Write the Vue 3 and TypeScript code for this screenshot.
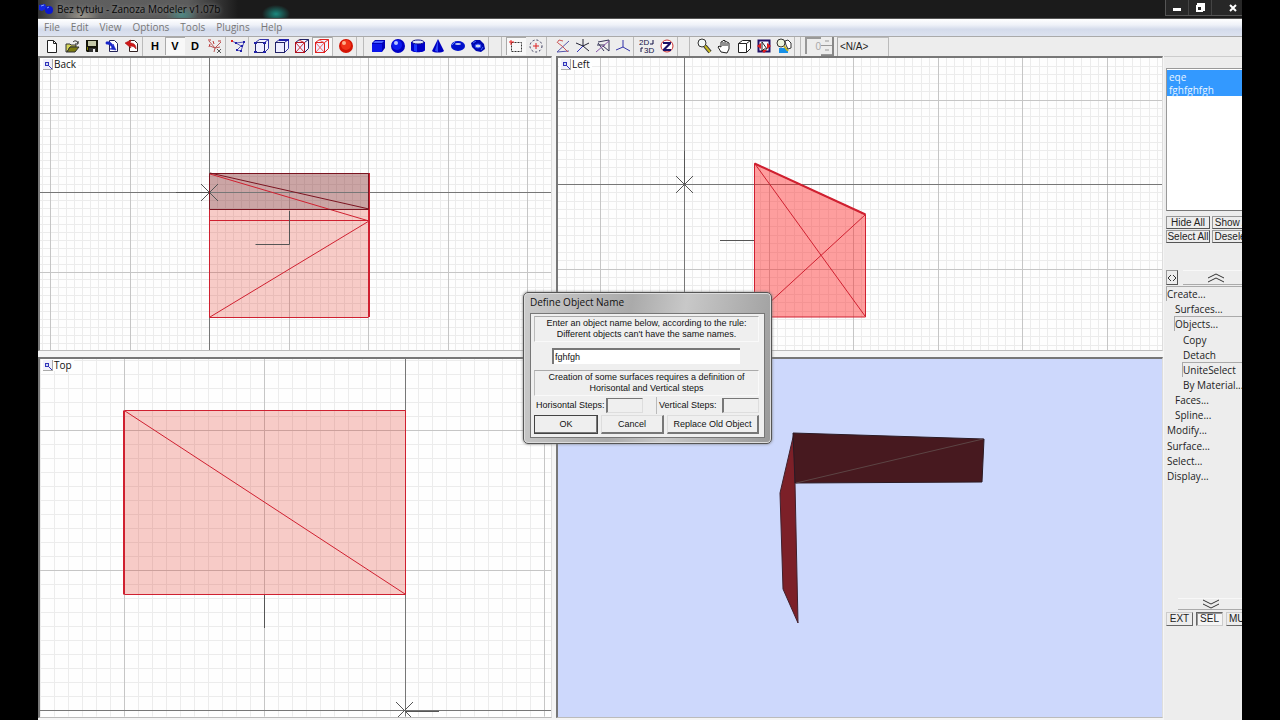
<script setup lang="ts">
import { ref } from 'vue'

interface Tool { name: string; art: string; on?: boolean }
interface Line { k: string; x1: number | string; y1: number | string; x2: number | string; y2: number | string; cls: string }

const menus = ['File', 'Edit', 'View', 'Options', 'Tools', 'Plugins', 'Help']
const letter = (c: string) => `<text x="8" y="12" text-anchor="middle" font-family="Liberation Sans" font-weight="bold" font-size="11">${c}</text>`
const cube = (front: string, back: string, extra = '') =>
  `<path d="M5.500 1.500h9v9l-4 4M5.500 1.500l-4 3M14.500 1.500l-4 3" fill="#f4f4ff" stroke="${back}"/><rect x="1.500" y="4.500" width="9" height="10" fill="#eef" stroke="${front}" stroke-width="1"/>${extra}`

const fileTools: Tool[] = [
  { name: 'New', art: '<path d="M3.500 2.500h6l3 3v9h-9z" fill="#fff" stroke="#222"/><path d="M9.500 2.500v3h3" fill="none" stroke="#222"/>' },
  { name: 'Open', art: '<path d="M2 6h4l1 1h5v2H6l-3 5H2z" fill="#d6d65a" stroke="#333"/><path d="M3 14l3-5h9l-4 5z" fill="#7c7c10" stroke="#333"/><path d="M9 4c2-2 4-1 5 1M14 3v3h-3" fill="none" stroke="#222"/>' },
  { name: 'Save', art: '<path d="M2 2h12v12H3l-1-1z" fill="#151509"/><path d="M4 3h8v5H4z" fill="#c5c9a8"/><path d="M5 10h7v4H5z" fill="#333"/><path d="M9 11h2v3H9z" fill="#eee"/><path d="M3 9h1v3H3z" fill="#808000"/>' },
  { name: 'Import', art: '<path d="M5.500 2.500h5l3 3v8h-8z" fill="#fff" stroke="#225"/><path d="M2 4c4-1 6 1 7 4V6l3 6-6-1 2-1C7 7 5 6 2 6z" fill="#1428c8" stroke="#22c" stroke-width=".6"/>' },
  { name: 'Export', art: '<path d="M5.500 2.500h5l3 3v8h-8z" fill="#fff" stroke="#322"/><path d="M1 5l6-3-1 3c4 0 6 2 6 6-1-2-3-3-6-3l1 2z" fill="#d01818" stroke="#a11" stroke-width=".6"/>' },
]
const axisTools: Tool[] = [
  { name: 'H', art: letter('H') },
  { name: 'V', art: letter('V'), on: true },
  { name: 'D', art: letter('D') },
  { name: 'Axes', art: '<path d="M2 3l6 7M14 4l-6 6-1 4M3 8l5 2 5-1" fill="none" stroke="#b55"/><path d="M1 2h3M6 3l1 3M11 3h3M3 6l-1 3" stroke="#b33" fill="none"/><path d="M10 11l4 4m0-4l-4 4" stroke="#555"/>' },
]
const pathTools: Tool[] = [
  { name: 'Vertices', art: '<path d="M2 3l4 2 8-1-3 9-4-1 4-4-5-3" fill="none" stroke="#55b"/><path d="M5 4h2v2H5zM13 3h2v2h-2zM10 12h2v2h-2zM6 11h2v2H6zM11 7h2v2h-2z" fill="#22a"/><path d="M1 2h2v2H1z" fill="#d22"/>' },
]
const modeTools: Tool[] = [
  { name: 'Vertex mode', art: cube('#226', '#33a', '<path d="M0 4h3v2H0zM9 4h3v2H9zM0 13h3v2H0zM9 13h3v2H9z" fill="#22a"/>') },
  { name: 'Edge mode', art: cube('#226', '#33a', '<path d="M5 1h10v2H5z" fill="#22a"/>') },
  { name: 'Face mode', art: cube('#a12', '#226', '<path d="M2 14l8-9M2 5l8 9M5 2l6 3" stroke="#c33"/>') },
  { name: 'Object mode', art: cube('#d22', '#d22', '<path d="M2 14l8-9M2 5l8 9M5 2l6 3" stroke="#e66"/>'), on: true },
]
const renderTools: Tool[] = [
  { name: 'Material', art: '<circle cx="8" cy="8" r="7" fill="#d41404"/><circle cx="8" cy="7" r="5" fill="#f03318"/><circle cx="6" cy="5" r="2" fill="#ffb28c"/>' },
]
const shapeTools: Tool[] = [
  { name: 'Box', art: '<path d="M2 5l3-3h10v8l-3 4H2z" fill="#0000b8"/><path d="M2 6h10v8H2z" fill="#0a14ea"/><path d="M3 5l2-2h9l-2 2z" fill="#4b62ff"/>' },
  { name: 'Sphere', art: '<circle cx="8" cy="8" r="7" fill="#0000c4"/><circle cx="7" cy="7" r="5" fill="#0c1cf0"/><circle cx="6" cy="5" r="2" fill="#b8c8ff"/>' },
  { name: 'Cylinder', art: '<path d="M1 4v8c0 3 14 3 14 0V4z" fill="#0000c8"/><path d="M4 5v8l3 1V5z" fill="#1c38ff"/><ellipse cx="8" cy="4" rx="6" ry="2" fill="#dde4f4" stroke="#11118a"/>' },
  { name: 'Cone', art: '<path d="M8 1l6 12c-2 2-10 2-12 0z" fill="#0000c0"/><path d="M8 2v12l-3-1z" fill="#3048f4"/>' },
  { name: 'Torus', art: '<ellipse cx="8" cy="8" rx="7" ry="5" fill="#0010cc"/><ellipse cx="8" cy="6" rx="3" ry="1" fill="#c6d4f4"/><path d="M2 7l3-3" stroke="#5078ff"/>' },
  { name: 'Knot', art: '<path d="M1 5l4-3 5 0 4 4 1 5-4 3-5-1-4-4z" fill="#0008b0"/><ellipse cx="8" cy="8" rx="3" ry="2" fill="#d4dcf0" stroke="#2144ff"/><path d="M3 5l3-2m5 9l2-3" stroke="#4468ff"/>' },
]
const selTools: Tool[] = [
  { name: 'Rectangle select', art: '<rect x="3.500" y="4.500" width="10" height="9" fill="none" stroke="#333" stroke-dasharray="2 1"/><path d="M1 4h5M3 2v5" stroke="#e22"/>', on: true },
  { name: 'Circle select', art: '<circle cx="8" cy="8" r="6" fill="none" stroke="#335" stroke-dasharray="2 2"/><path d="M5 8h6M8 5v6" stroke="#d22"/>' },
]
const snapTools: Tool[] = [
  { name: 'Local axes', art: '<path d="M2 14l12-1M14 3L2 14" fill="none" stroke="#55a"/><path d="M3 5l4 3 6 6M2 5l2-3 4 1" fill="none" stroke="#c55"/>' },
  { name: 'Axis move', art: '<path d="M8 1v7M8 8l6 5M1 5l7 3 6-3" fill="none" stroke="#223" stroke-width="1"/><path d="M8 8l-6 6" stroke="#33b"/>' },
  { name: 'Plane', art: '<path d="M3 4l11-2v11L8 8M3 5l6 8M2 7h8" fill="none" stroke="#335"/><path d="M1 14L14 3" stroke="#85a"/>' },
  { name: 'Tripod', art: '<path d="M8 2v7M8 9l-7 3M8 9l7 4" fill="none" stroke="#33a"/>' },
]
const dimTools: Tool[] = [
  { name: '2D to 3D', art: '<g font-family="Liberation Sans" font-size="8" fill="#114"><text x="0" y="7">2D</text><text x="5" y="15">3D</text></g><path d="M14 2v4h-3M2 14v-4h2" fill="none" stroke="#114"/>' },
  { name: 'Z buffer', art: '<circle cx="8" cy="8" r="6" fill="#fff" stroke="#c33"/><path d="M4 4h8v2l-5 5h5v2H4v-2l5-5H4z" fill="#1b1168"/>' },
]
const viewTools: Tool[] = [
  { name: 'Zoom', art: '<circle cx="6" cy="5" r="4" fill="#f4f8f8" stroke="#333"/><path d="M9 8l5 6" stroke="#333" stroke-width="4"/><path d="M9 8l5 6" stroke="#c6b820" stroke-width="2"/>' },
  { name: 'Pan', art: '<path d="M5 14L2 9l1-1 2 1V4l2-1 1-1 1 1 2 1 2 1v6l-2 4z" fill="#fff" stroke="#222"/><path d="M7 4v4M9 3v5M11 5v3" stroke="#222"/>' },
  { name: 'Orbit', art: '<path d="M2.500 5.500l4-3h8v8l-4 4h-8z" fill="#fff" stroke="#222"/><path d="M2.500 5.500h8v9M10.500 5.500l4-3" fill="none" stroke="#222"/>' },
  { name: 'Fit', art: '<rect x="2.500" y="2.500" width="11" height="11" fill="#f7f7ff" stroke="#216" stroke-width="2"/><path d="M1 8l4-3v6zM15 8l-4-3v6zM8 15l-3-3h6z" fill="#e01c1c"/><path d="M6 4l5 7H8l-2 2z" fill="#fff" stroke="#222"/>' },
  { name: 'Zoom region', art: '<path d="M3 10h9v5H3z" fill="#1690e8"/><circle cx="5" cy="5" r="4" fill="#edf4dd" stroke="#333"/><path d="M8 8l4 5" stroke="#c6b820" stroke-width="2"/><path d="M9 3l3-1 3 3v5l-3 1-2-4z" fill="#fff" stroke="#333"/>' },
]
const groups = [
  { cls: 'g-file', tools: fileTools }, { cls: 'g-axis', tools: axisTools }, { cls: 'g-path', tools: pathTools },
  { cls: 'g-mode', tools: modeTools }, { cls: 'g-render', tools: renderTools }, { cls: 'g-shape', tools: shapeTools },
  { cls: 'g-sel', tools: selTools }, { cls: 'g-snap', tools: snapTools }, { cls: 'g-dim', tools: dimTools },
  { cls: 'g-view', tools: viewTools },
]

/* Grid lines around an origin; every tenth line is a major one. */
function grid(ox: number, oy: number, major: number, w: number, h: number): Line[] {
  const out: Line[] = []
  const step = major / 10
  for (let pass = 0; pass < 2; pass++) {
    for (let i = -90; i <= 90; i++) {
      if (i === 0 || (i % 10 === 0) !== (pass === 1)) continue
      const cls = pass ? 'major' : 'minor'
      const x = Math.round(ox + i * step) + 0.5
      const y = Math.round(oy + i * step) + 0.5
      if (x > 0 && x < w) out.push({ k: 'x' + i, x1: x, y1: 0, x2: x, y2: '100%', cls })
      if (y > 0 && y < h) out.push({ k: 'y' + i, x1: 0, y1: y, x2: '100%', y2: y, cls })
    }
  }
  return out
}
const backGrid = grid(169, 134, 79.5, 1600, 1200)
const leftGrid = grid(126, 126, 84.5, 1600, 1200)
const topGrid = grid(364, 351, 140, 1600, 1200)

const tree = [
  { t: 'Create...', l: 0, open: true }, { t: 'Surfaces...', l: 1 }, { t: 'Objects...', l: 1, open: true },
  { t: 'Copy', l: 2 }, { t: 'Detach', l: 2 }, { t: 'UniteSelect', l: 2, open: true }, { t: 'By Material...', l: 2 },
  { t: 'Faces...', l: 1 }, { t: 'Spline...', l: 1 }, { t: 'Modify...', l: 0 }, { t: 'Surface...', l: 0 },
  { t: 'Select...', l: 0 }, { t: 'Display...', l: 0 },
]
const selected = ref(['eqe', 'fghfghfgh'])
const objectName = ref('fghfgh')
</script>

<template>
  <div class="window">
    <header class="titlebar">
      <svg class="logo" width="16" height="12" viewBox="0 0 16 12"><path d="M1 2l6-1 2 4-5 3-3-1z" fill="#1428e0" /><circle cx="11" cy="7" r="4" fill="#0c18d0" /><path d="M3 3l3-1M9 5l2-1" stroke="#7fa0ff" /></svg>
      <span class="caption">Bez tytułu - Zanoza Modeler v1.07b</span>
      <div class="winbtns">
        <button aria-label="Minimize"><svg width="12" height="12"><path d="M2 6h8v3H2z" fill="#fff" /></svg></button>
        <button aria-label="Restore"><svg width="12" height="12"><path d="M4 3V2h6v6H9M3 4h5v5H3z" fill="none" stroke="#fff" stroke-width="2" /></svg></button>
        <button aria-label="Close"><svg width="12" height="12"><path d="M3 3l6 6M9 3l-6 6" stroke="#fff" stroke-width="2" /></svg></button>
      </div>
    </header>
    <nav class="menubar"><button v-for="m in menus" :key="m">{{ m }}</button></nav>
    <div class="toolbar">
      <div v-for="g in groups" :key="g.cls" class="group" :class="g.cls">
        <button v-for="t in g.tools" :key="t.name" :class="{ on: t.on }" :aria-label="t.name"><svg width="16" height="16" viewBox="0 0 16 16" v-html="t.art"></svg></button>
      </div>
      <div class="group g-spin">
        <input type="text" value="0" disabled aria-label="Step" />
        <div class="spin"><button aria-label="Increase"><svg width="4" height="2"><path d="M0 1h4" stroke="#999" /></svg></button><button aria-label="Decrease"><svg width="4" height="2"><path d="M0 1h4" stroke="#999" /></svg></button></div>
        <select aria-label="Layer"><option>&lt;N/A&gt;</option></select>
      </div>
    </div>

    <main class="body">
      <div class="views">
        <section class="view">
          <h2><svg width="10" height="11"><rect x="2.500" y="3.500" width="3" height="3" fill="#cde" stroke="#33b" /><path d="M6 7l3 3" stroke="#33b" /></svg>Back</h2>
          <svg class="scene">
            <line v-for="l in backGrid" :key="l.k" :class="l.cls" :x1="l.x1" :y1="l.y1" :x2="l.x2" :y2="l.y2" />
            <path d="M170 115h160v36H170z" fill="#7a1414" fill-opacity=".38" />
            <path d="M170 151h160v108H170z" fill="#e02818" fill-opacity=".24" />
            <line class="axis" x1="169.500" y1="0" x2="169.500" y2="100%" /><line class="axis" x1="0" y1="134.500" x2="100%" y2="134.500" />
            <path class="cursor" d="M136 134.500h33M161 126l17 17M178 126l-17 17" />
            <path d="M169.500 151v108.500h159M169.500 162.500h160M170 116l159 47M170 259l159-96" class="red" />
            <path d="M329 115v144" class="red" stroke-width="2" />
            <path d="M169.500 151V115.500h159v36h-159M170 115l159 36" class="maroon" />
            <path d="M249.500 153v33.500h-34" class="cursor" />
          </svg>
        </section>
        <section class="view">
          <h2><svg width="10" height="11"><rect x="2.500" y="3.500" width="3" height="3" fill="#cde" stroke="#33b" /><path d="M6 7l3 3" stroke="#33b" /></svg>Left</h2>
          <svg class="scene">
            <line v-for="l in leftGrid" :key="l.k" :class="l.cls" :x1="l.x1" :y1="l.y1" :x2="l.x2" :y2="l.y2" />
            <line class="axis" x1="126.500" y1="0" x2="126.500" y2="100%" /><line class="axis" x1="0" y1="126.500" x2="100%" y2="126.500" />
            <path d="M126.500 93v33M118 118l17 17M135 118l-17 17M162 182.500h35" class="cursor" />
            <path d="M196.500 105.500l111 51v102.500h-111z" fill="#ff2020" fill-opacity=".43" class="red" />
            <path d="M196.500 105.500l111 51" class="red" stroke-width="2" />
            <path d="M197 106l110 152M307 157L197 258" class="red" />
          </svg>
        </section>
        <section class="view">
          <h2><svg width="10" height="11"><rect x="2.500" y="3.500" width="3" height="3" fill="#cde" stroke="#33b" /><path d="M6 7l3 3" stroke="#33b" /></svg>Top</h2>
          <svg class="scene">
            <line v-for="l in topGrid" :key="l.k" :class="l.cls" :x1="l.x1" :y1="l.y1" :x2="l.x2" :y2="l.y2" />
            <line class="axis" x1="365.500" y1="0" x2="365.500" y2="100%" /><line class="axis" x1="0" y1="351.500" x2="100%" y2="351.500" />
            <path d="M224.500 236v33M365 352.500h34M356 343l17 17M373 343l-17 17" class="cursor" />
            <path d="M84.500 51.500h281v184h-281z" fill="#e02818" fill-opacity=".24" class="red" />
            <path d="M83.500 51.500v184M85 52l280 183" class="red" />
          </svg>
        </section>
        <section class="view solid" aria-label="3D view">
          <svg class="scene">
            <path d="M236 74l-14 60 3 96 15 34-3-140z" fill="#7c2028" stroke="#40202c" />
            <path d="M235 74l191 6-2 43-187 1z" fill="#47191f" stroke="#2b1a24" />
            <path d="M238 124l187-44" stroke="#5c4444" stroke-width="1" />
          </svg>
        </section>
      </div>

      <aside class="side">
        <div class="sideinner">
          <select v-model="selected" class="objects" multiple aria-label="Objects"><option>eqe</option><option>fghfghfgh</option></select>
          <div class="pick"><button>Hide All</button><button>Show All</button><button>Select All</button><button>Deselect</button></div>
          <div class="fold">
            <button class="angle" aria-label="Collapse"><svg width="10" height="13"><path d="M4 4L1 7l3 3M6 4l3 3-3 3" fill="none" stroke="#333" /></svg></button>
            <button class="bar" aria-label="Scroll up"><svg width="18" height="10"><path d="M1 5l8-4 8 4M1 9l8-4 8 4" fill="none" stroke="#333" /></svg></button>
          </div>
          <div class="tree"><button v-for="n in tree" :key="n.t" :class="['l' + n.l, { open: n.open }]">{{ n.t }}</button></div>
          <button class="bar lower" aria-label="Scroll down"><svg width="18" height="10"><path d="M1 1l8 4 8-4M1 5l8 4 8-4" fill="none" stroke="#333" /></svg></button>
          <div class="modes"><button>EXT</button><button class="on">SEL</button><button>MUL</button></div>
        </div>
      </aside>
    </main>

    <form class="dialog" role="dialog" aria-labelledby="dlg-title" @submit.prevent>
      <h1 id="dlg-title">Define Object Name</h1>
      <div class="panel">
        <p class="note"><label for="obj-name">Enter an object name below, according to the rule:<br />Different objects can't have the same names.</label></p>
        <input id="obj-name" v-model="objectName" class="name" type="text" />
        <p class="note">Creation of some surfaces requires a definition of<br />Horisontal and Vertical steps</p>
        <div class="steps">
          <label for="hs">Horisontal Steps:</label><input id="hs" type="text" disabled />
          <label for="vs" class="second">Vertical Steps:</label><input id="vs" type="text" disabled />
        </div>
        <div class="actions"><button class="ok">OK</button><button type="button">Cancel</button><button type="button">Replace Old Object</button></div>
      </div>
    </form>
  </div>
</template>

<style scoped>
* { box-sizing: border-box; }
button, input, select { font: inherit; color: inherit; margin: 0; padding: 0; border: 0; border-radius: 0; background: none; outline: 0; }
svg { display: block; flex: none; }
h1, h2, p { margin: 0; font-weight: normal; }
.window { position: relative; display: flex; flex-direction: column; height: 100vh; margin: 0 38px; overflow: hidden; background: #ededed; font: 10px/14px "Open Sans", "Noto Sans", sans-serif; color: #222; }

.titlebar { display: flex; align-items: center; height: 19px; flex: none; border-bottom: 1px solid #555;
  background: radial-gradient(ellipse 14px 9px at 238px 14px, #1b8a80, transparent), radial-gradient(ellipse 16px 8px at 144px 15px, #4b8883, transparent), radial-gradient(ellipse 18px 8px at 44px 16px, #9c978c, transparent), linear-gradient(90deg, #333, #606060 20px, #5c5c5c 150px, transparent 200px), #1b1b1b; }
.logo { margin-right: 3px; }
.caption { color: #050505; text-shadow: 0 0 4px #999; white-space: nowrap; }
.winbtns { display: flex; margin-left: auto; height: 16px; align-self: flex-start; border: 1px solid #555; border-top: 0; border-right: 0; background: #272727; }
.winbtns button { width: 23px; display: flex; align-items: center; justify-content: center; border-right: 1px solid #444; }
.winbtns button:last-child { width: 30px; padding-left: 12px; border-right: 0; }

.menubar { display: flex; gap: 11px; height: 18px; flex: none; padding: 0 6px; background: linear-gradient(#fff 0, #eef1f8 35%, #d4dbeb 60%, #dde3f0); border-bottom: 1px solid #aaa; }
.menubar button { color: #777; line-height: 17px; }

.toolbar { display: flex; height: 19px; flex: none; padding-left: 4px; overflow: hidden; }
.group { display: flex; flex: none; border-right: 1px solid #bbb; }
.group button { width: 20px; height: 18px; display: flex; align-items: center; justify-content: center; }
.group button.on { background: #f8f8f8; box-shadow: inset 1px 1px #aaa; }
.g-axis, .g-path, .g-mode { margin-left: 2px; }
.g-mode, .g-render { margin-left: 3px; }
.g-shape { margin-left: 11px; box-shadow: -4px 0 #ededed, -5px 0 #bbb; }
.g-sel { margin-left: 17px; box-shadow: -4px 0 #ededed, -5px 0 #bbb; }
.g-snap { margin-left: 6px; }
.g-dim { margin-left: 3px; }
.g-view { margin-left: 16px; box-shadow: -4px 0 #ededed, -5px 0 #bbb; }
.g-spin { margin-left: 10px; box-shadow: -4px 0 #ededed, -5px 0 #bbb; }
.g-spin input { width: 16px; height: 17px; border: 2px solid #999; border-right: 0; border-bottom: 0; color: #aaa; text-align: right; line-height: 14px; font-family: "Liberation Sans", sans-serif; }
.g-spin .spin { width: 13px; border-right: 2px solid #888; border-bottom: 1px solid #888; }
.g-spin .spin button { width: 11px; height: 9px; border-bottom: 1px solid #999; }
.g-spin select { width: 51px; margin-left: 3px; border-left: 1px solid #aaa; border-top: 1px solid #bbb; appearance: none; padding-left: 2px; font-family: "Liberation Sans", sans-serif; }

.body { display: flex; flex: 1; min-height: 0; }
.views { flex: 1; min-width: 0; display: grid; grid-template-columns: 514fr 607fr; grid-template-rows: 295fr 360fr; column-gap: 4px; row-gap: 6px; padding: 0 1px 2px 0; background: #f5f5f5; }
.view { position: relative; min-width: 0; min-height: 0; overflow: hidden; background: #fefefe; border-top: 2px solid #777; border-left: 2px solid #777; border-bottom: 1px solid #bbb; border-right: 1px solid #ddd; }
.view.solid { background: #cdd8fc; }
.view h2 { position: absolute; z-index: 1; left: 1px; top: 0; display: flex; align-items: center; gap: 1px; padding: 0 2px; background: #fefefe; font-size: 10px; line-height: 12px; color: #111; }
.view h2 svg { background: #f1f1fa; border-right: 1px solid #aaa; border-bottom: 1px solid #aaa; }
.scene { width: 100%; height: 100%; }
.minor { stroke: #ececec; }
.major { stroke: #c6c6c6; }
.axis { stroke: #777; }
.cursor { stroke: #555; fill: none; }
.red { stroke: #cf2030; }
.red:not([fill]) { fill: none; }
.maroon { stroke: #7a1420; fill: none; }

.side { width: 78px; flex: none; overflow: hidden; }
.sideinner { width: 100px; display: flex; flex-direction: column; padding: 11px 0 0 2px; border-top: 1px solid #ccc; }
.objects { appearance: none; height: 143px; padding-top: 1px; border: 1px solid #999; border-bottom-color: #777; background: #fff; overflow: hidden; }
.objects option { height: 13px; min-height: 13px; line-height: 13px; padding: 0 2px; color: #e8f4ff; background: #3399ff linear-gradient(#3399ff, #3399ff); }
.pick { display: grid; grid-template-columns: 44px 44px; gap: 1px 2px; margin-top: 5px; font: 10px/12px "Liberation Sans", sans-serif; }
.pick button { height: 13px; white-space: nowrap; border: 1px solid #999; border-right-color: #555; border-bottom-color: #555; overflow: hidden; }
.fold { display: flex; gap: 5px; margin-top: 27px; height: 15px; }
.angle { width: 12px; border: 1px solid #999; border-right-color: #555; border-bottom-color: #555; }
.bar { flex: 1; display: flex; align-items: center; padding-left: 24px; border-bottom: 1px solid #aaa; border-top: 1px solid #f8f8f8; }
.bar.lower { flex: none; height: 12px; margin: 115px 0 0 12px; }
.tree { display: flex; flex-direction: column; height: 197px; margin-top: 1px; }
.tree button { flex: 1; text-align: left; white-space: nowrap; line-height: 14px; border-left: 1px solid transparent; border-top: 1px solid transparent; }
.tree .open { border-color: #aaa; }
.tree .l1 { margin-left: 8px; }
.tree .l2 { margin-left: 16px; }
.modes { display: flex; gap: 3px; margin-top: 2px; font: 10px/12px "Liberation Sans", sans-serif; }
.modes button { width: 27px; height: 14px; border: 1px solid #ccc; border-right-color: #666; border-bottom-color: #666; }
.modes .on { border: 1px solid #666; border-right-color: #ccc; border-bottom-color: #ccc; box-shadow: inset 1px 1px #999; background: #f5f5f5; }

.dialog { position: absolute; left: 485px; top: 292px; width: 249px; padding: 0 6px 5px; border: 1px solid #555; border-radius: 5px; background: linear-gradient(100deg, #ccc, #aaa 40%, #c8c8c8 60%, #999); box-shadow: inset 0 0 0 1px #ddd, 0 0 3px #777; font: 9px/11px "Liberation Sans", sans-serif; color: #111; }
.dialog h1 { height: 20px; font: 10px/19px "Open Sans", sans-serif; }
.panel { display: flex; flex-direction: column; background: #efefef; border: 1px solid #777; padding: 2px 5px 3px 3px; }
.note { text-align: center; padding: 1px 0; border: 1px solid #f9f9f9; border-top-color: #aaa; border-left-color: #bbb; white-space: nowrap; }
.name { height: 16px; margin: 6px 19px 6px 18px; background: #fff; border-left: 2px solid #777; border-top: 2px solid #777; padding-left: 1px; }
.steps { display: flex; height: 17px; align-items: stretch; margin-top: 1px; line-height: 17px; white-space: nowrap; }
.steps label { width: 72px; padding-left: 2px; }
.steps .second { width: 64px; margin-left: 13px; border-left: 1px solid #bbb; }
.steps input { width: 37px; margin: 1px 0; border: 1px solid #ddd; border-left: 2px solid #777; border-top: 1px solid #777; }
.steps input:last-child { flex: 1; min-width: 0; margin-left: 2px; }
.actions { display: grid; grid-template-columns: 64px 63px 92px; justify-content: space-between; margin-top: 1px; font-size: 9px; }
.actions button { height: 19px; border: 1px solid #ddd; border-right: 2px solid #777; border-bottom: 2px solid #777; white-space: nowrap; }
.actions .ok { border: 1px solid #444; box-shadow: inset -1px -1px #777; }
</style>

<style>
html, body { background: #000; }
body { overflow: hidden; }
</style>
